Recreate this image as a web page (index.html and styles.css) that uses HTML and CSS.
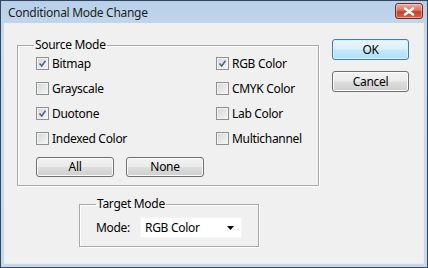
FILE: index.html
```html
<!DOCTYPE html>
<html lang="en">
<head>
<meta charset="utf-8">
<title>Conditional Mode Change</title>
<link rel="stylesheet" href="styles.css">
</head>
<body>
<div class="window">
  <div class="titlebar">
    <span class="title">Conditional Mode Change</span>
    <button class="close" aria-label="Close">
      <svg width="12" height="9" viewBox="0 0 12 9"><path d="M2 1.5 L10 7.5 M10 1.5 L2 7.5" stroke="#fff" stroke-width="2.4" stroke-linecap="round"/></svg>
    </button>
  </div>
  <div class="client">
    <div class="main">
      <fieldset class="group source">
        <legend>Source Mode</legend>
        <div class="checks">
          <label class="check"><span class="box on"><svg viewBox="0 0 13 13"><path d="M3 6.4 L5.6 9.4 L10 3.2" fill="none" stroke="#4a5f93" stroke-width="1.8"/></svg></span>Bitmap</label>
          <label class="check"><span class="box on"><svg viewBox="0 0 13 13"><path d="M3 6.4 L5.6 9.4 L10 3.2" fill="none" stroke="#4a5f93" stroke-width="1.8"/></svg></span>RGB Color</label>
          <label class="check"><span class="box"></span>Grayscale</label>
          <label class="check"><span class="box"></span>CMYK Color</label>
          <label class="check"><span class="box on"><svg viewBox="0 0 13 13"><path d="M3 6.4 L5.6 9.4 L10 3.2" fill="none" stroke="#4a5f93" stroke-width="1.8"/></svg></span>Duotone</label>
          <label class="check"><span class="box"></span>Lab Color</label>
          <label class="check"><span class="box"></span>Indexed Color</label>
          <label class="check"><span class="box"></span>Multichannel</label>
        </div>
        <div class="row-buttons">
          <button class="btn small">All</button>
          <button class="btn small">None</button>
        </div>
      </fieldset>
      <fieldset class="group target">
        <legend>Target Mode</legend>
        <div class="mode-row">
          <span class="mode-label">Mode:</span>
          <div class="select">
            <span>RGB Color</span>
            <svg width="7" height="4" viewBox="0 0 7 4"><path d="M0 0 H7 L3.5 4 Z" fill="#000"/></svg>
          </div>
        </div>
      </fieldset>
    </div>
    <div class="side">
      <button class="btn wide default">OK</button>
      <button class="btn wide">Cancel</button>
    </div>
  </div>
</div>
</body>
</html>
```

FILE: styles.css
```css
* { box-sizing: border-box; }
html, body { margin: 0; padding: 0; }
body {
  width: 428px;
  height: 268px;
  font-family: "Noto Sans", "Open Sans", sans-serif;
  font-size: 12px;
  letter-spacing: -0.3px;
  color: #000;
  background: #fff;
}
.window {
  width: 428px;
  height: 268px;
  border: 1px solid #34475a;
  background: linear-gradient(#b7cfe9, #c9dbee 40px, #c6d9ec);
  padding: 0 3px 3px 3px;
  display: flex;
  flex-direction: column;
}
.titlebar {
  height: 22px;
  flex: none;
  display: flex;
  justify-content: space-between;
  align-items: flex-start;
  padding-left: 4px;
  padding-right: 1px;
}
.title {
  line-height: 22px;
  padding-top: 1px;
  color: #1e1e1e;
}
.close {
  margin-top: 2px;
  width: 28px;
  height: 16px;
  border: 1px solid #6f2b22;
  border-radius: 3px;
  background: linear-gradient(#eab0a2, #d9735f 45%, #c4402a 55%, #d5604a);
  box-shadow: inset 0 0 0 1px rgba(255,220,210,0.5);
  padding: 0;
  display: flex;
  align-items: center;
  justify-content: center;
}
.client {
  flex: 1;
  background: #f0f0f0;
  display: flex;
  padding: 14px 0 0 13px;
  border-right: 1px solid #e4eef8;
  border-bottom: 1px solid #e4eef8;
}
.main {
  width: 302px;
  display: flex;
  flex-direction: column;
}
.group {
  margin: 0;
  border: 1px solid #a8a8a8;
  box-shadow: 1px 1px 0 #fff, inset 1px 1px 0 #fff;
  padding: 0 0 0 16px;
  min-width: 0;
}
.group legend {
  padding: 0 1px;
  line-height: 16px;
  height: 16px;
}
.source {
  width: 302px;
  padding-bottom: 8px;
}
.checks {
  display: grid;
  grid-template-columns: 180px auto;
  grid-auto-rows: 20px;
  row-gap: 5px;
  padding-left: 2px;
}
.check {
  display: flex;
  align-items: center;
  gap: 3px;
  white-space: nowrap;
}
.box {
  width: 13px;
  height: 13px;
  flex: none;
  border: 1px solid #8e8f8f;
  background: linear-gradient(135deg, #d3d5d8, #f7f7f7);
  box-shadow: inset 0 0 0 1px #f3f3f3;
  display: flex;
}
.box svg { width: 11px; height: 11px; }
.row-buttons {
  display: flex;
  gap: 12px;
  margin-top: 9px;
  padding-left: 2px;
}
.btn {
  font: inherit;
  letter-spacing: inherit;
  color: #000;
  border: 1px solid #707070;
  border-radius: 3px;
  background: linear-gradient(#f2f2f2 0%, #ebebeb 48%, #dddddd 52%, #cfcfcf 100%);
  box-shadow: inset 0 0 0 1px #fbfbfb;
  padding: 0;
  line-height: 16px;
}
.btn.small { width: 78px; height: 20px; }
.side {
  display: flex;
  flex-direction: column;
  gap: 11px;
  margin-left: 13px;
  padding-top: 2px;
}
.btn.wide { width: 77px; height: 21px; }
.btn.default {
  border-color: #3c7fb1;
  background: linear-gradient(#eaf6fd 0%, #d9f0fc 48%, #c4e8fb 52%, #b2def6 100%);
  box-shadow: inset 0 0 0 1px #d8f0fb;
}
.target {
  margin-top: 10px;
  margin-left: 62px;
  width: 180px;
  padding-bottom: 8px;
}
.mode-row {
  display: flex;
  align-items: center;
  margin-top: 5px;
}
.mode-label { width: 44px; }
.select {
  width: 102px;
  height: 21px;
  background: #fff;
  border: 1px solid #f4f4f4;
  display: flex;
  align-items: center;
  justify-content: space-between;
  padding: 0 7px 0 4px;
}
```
